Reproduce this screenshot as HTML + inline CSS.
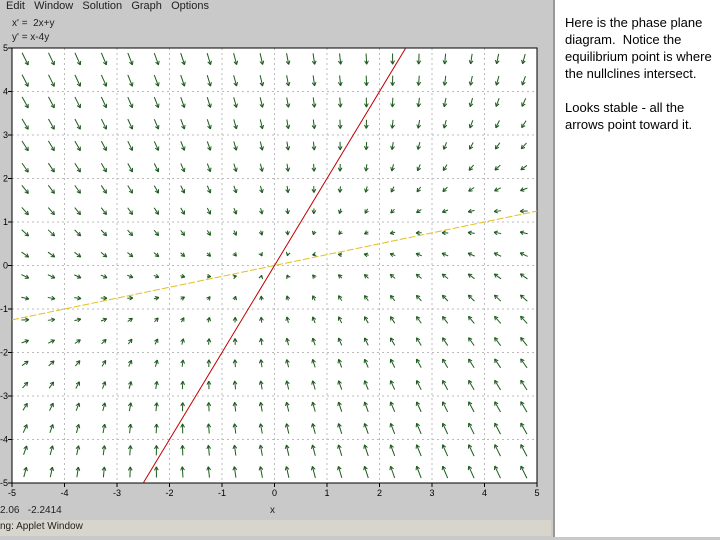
<!DOCTYPE html>
<html><head><meta charset="utf-8"><style>
body{margin:0;width:720px;height:540px;background:#fff;overflow:hidden;position:relative;font-family:"Liberation Sans",sans-serif}
#panel{position:absolute;left:0;top:0;width:553px;height:537px;background:#c9c9c9;border-right:2px solid #999}
#bot{position:absolute;left:0;top:537px;width:720px;height:3px;background:#c9c9c9}
.t{position:absolute;font-size:11px;color:#222;white-space:nowrap}
#txt{position:absolute;left:565px;top:14px;width:155px;font-size:13px;line-height:17px;color:#000}
#status{position:absolute;left:0;top:520px;width:551px;height:16px;background:#d8d5cc}
</style></head><body>
<div id="panel"></div>
<div id="status"></div>
<div id="bot"></div>
<div class="t" style="left:6px;top:0px">Edit&nbsp;&nbsp;&nbsp;Window&nbsp;&nbsp;&nbsp;Solution&nbsp;&nbsp;&nbsp;Graph&nbsp;&nbsp;&nbsp;Options</div>
<div class="t" style="left:12px;top:18px;font-size:10px">x' =&nbsp;&nbsp;2x+y</div>
<div class="t" style="left:12px;top:32px;font-size:10px">y' = x-4y</div>
<div class="t" style="left:0px;top:505px;font-size:10px">2.06&nbsp;&nbsp;&nbsp;-2.2414</div>
<div class="t" style="left:270px;top:505px;font-size:10px">x</div>
<div class="t" style="left:0px;top:521px;font-size:10px">ng: Applet Window</div>
<svg id="g" width="553" height="520" style="position:absolute;left:0;top:0"></svg>
<div id="txt">Here is the phase plane diagram.&nbsp; Notice the equilibrium point is where the nullclines intersect.<br><br>Looks stable - all the arrows point toward it.</div>
<script>
var X0=12,X1=537,Y0=48,Y1=483,sx=(X1-X0)/10,sy=(Y1-Y0)/10,ox=X0+5*sx,oy=Y0+5*sy;
var s='<rect x="'+X0+'" y="'+Y0+'" width="'+(X1-X0)+'" height="'+(Y1-Y0)+'" fill="#fff"/>';
for(var i=-4;i<=4;i++){var x=ox+i*sx,y=oy-i*sy;
s+='<line x1="'+x+'" y1="'+Y0+'" x2="'+x+'" y2="'+Y1+'" stroke="#bbb" stroke-dasharray="2,3"/>';
s+='<line x1="'+X0+'" y1="'+y+'" x2="'+X1+'" y2="'+y+'" stroke="#bbb" stroke-dasharray="2,3"/>';}
s+='<rect x="'+X0+'" y="'+Y0+'" width="'+(X1-X0)+'" height="'+(Y1-Y0)+'" fill="none" stroke="#000"/>';
for(var i=-5;i<=5;i++){var x=ox+i*sx,y=oy-i*sy;
s+='<line x1="'+x+'" y1="'+Y1+'" x2="'+x+'" y2="'+(Y1+4)+'" stroke="#000"/>';
s+='<line x1="'+(X0-4)+'" y1="'+y+'" x2="'+X0+'" y2="'+y+'" stroke="#000"/>';
s+='<text x="'+x+'" y="'+(Y1+13)+'" font-size="9" text-anchor="middle" font-family="Liberation Sans">'+i+'</text>';
s+='<text x="'+(X0-4)+'" y="'+(y+3)+'" font-size="9" text-anchor="end" font-family="Liberation Sans">'+i+'</text>';}
for(var r=0;r<20;r++)for(var c=0;c<20;c++){
var xv=-4.75+c*0.5,yv=4.75-r*0.5,dx=-2*xv+yv,dy=xv-4*yv,m=Math.sqrt(dx*dx+dy*dy);
var L=Math.max(2,14*Math.sqrt(m/29));var ux=dx/m*1.0,uy=-dy/m*sx/sy;var n=Math.sqrt(ux*ux+uy*uy);ux/=n;uy/=n;
var cx=ox+xv*sx,cy=oy-yv*sy,x1=cx-ux*L/2,y1=cy-uy*L/2,x2=cx+ux*L/2,y2=cy+uy*L/2;
s+='<line x1="'+x1+'" y1="'+y1+'" x2="'+x2+'" y2="'+y2+'" stroke="#1d5a1d" stroke-width="1"/>';
var a=Math.atan2(uy,ux),h=4;
s+='<path d="M'+x2+' '+y2+'L'+(x2-h*Math.cos(a-0.5))+' '+(y2-h*Math.sin(a-0.5))+'M'+x2+' '+y2+'L'+(x2-h*Math.cos(a+0.5))+' '+(y2-h*Math.sin(a+0.5))+'" stroke="#1d5a1d" fill="none"/>';}
s+='<line x1="'+X0+'" y1="'+(oy+1.25*sy)+'" x2="'+X1+'" y2="'+(oy-1.25*sy)+'" stroke="#e0c020" stroke-dasharray="7,2"/>';
s+='<line x1="'+(ox-2.5*sx)+'" y1="'+Y1+'" x2="'+(ox+2.5*sx)+'" y2="'+Y0+'" stroke="#c00000"/>';
document.getElementById('g').innerHTML=s;
</script>
</body></html>
